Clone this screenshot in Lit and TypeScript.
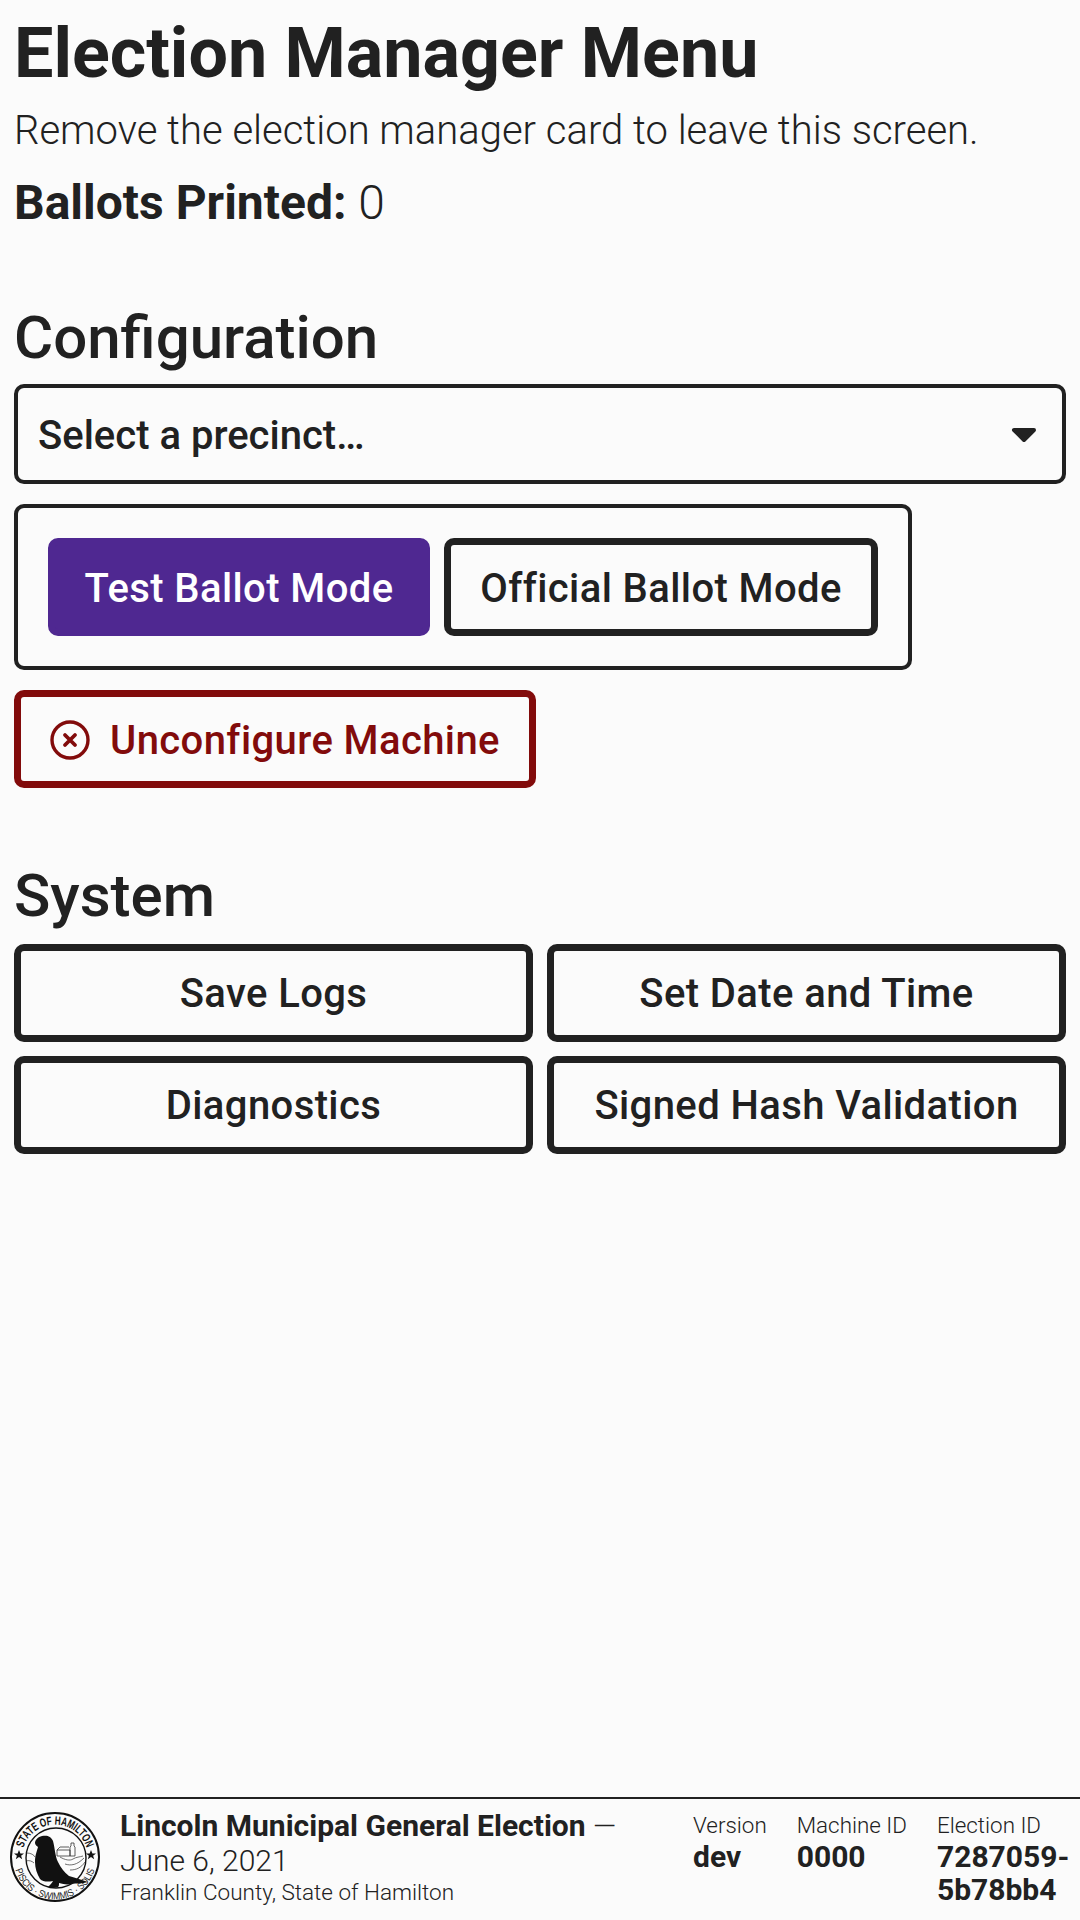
import { LitElement, html, css } from "lit";
import { customElement } from "lit/decorators.js";

@customElement("app-root")
export class AppRoot extends LitElement {
  static styles = css`
    :host { display: flex; flex-direction: column; width: 1080px; height: 1920px; background: #fbfbfb; color: #212121; font-family: Roboto, "Noto Sans", sans-serif; overflow: hidden; }
    main { flex: 1; padding: 14px 14px 0; min-height: 0; }
    h1 { margin: 0; font-size: 70px; line-height: 78px; font-weight: 700; }
    h2 { margin: 0; font-size: 60px; line-height: 64px; font-weight: 500; }
    .sub { margin: 16px 0 0; font-size: 40px; line-height: 46px; font-weight: 300; }
    .printed { margin: 24px 0 0; font-size: 48px; line-height: 50px; font-weight: 300; }
    .printed b { font-weight: 700; }
    .config { margin-top: 78px; }
    .sel { margin-top: 14px; height: 100px; box-sizing: border-box; border: 4px solid #212121; border-radius: 10px; display: flex; align-items: center; justify-content: space-between; padding: 2px 25px 0 20px; font-size: 40px; font-weight: 500; }
    .sel svg { width: 26px; height: 16px; display: block; }
    .modes { margin-top: 20px; width: 898px; height: 166px; box-sizing: border-box; border: 4px solid #212121; border-radius: 10px; display: flex; align-items: center; gap: 14px; padding: 0 30px; }
    .btn { box-sizing: border-box; height: 98px; padding-top: 2px; border: 7px solid #212121; border-radius: 10px; display: flex; align-items: center; justify-content: center; font-size: 40px; font-weight: 500; letter-spacing: 0.4px; white-space: nowrap; }
    .modes .btn { flex: none; }
    .test { width: 382px; background: #4f2891; border-color: #4f2891; color: #fff; }
    .official { width: 434px; }
    .danger { margin-top: 20px; width: 522px; border-color: #820b0b; color: #820b0b; gap: 20px; }
    .danger svg { width: 40px; height: 40px; display: block; }
    .system { margin-top: 76px; }
    .grid { margin-top: 16px; display: grid; grid-template-columns: 519px 519px; gap: 14px; }
    .grid .btn { padding-top: 0; }
    footer { height: 123px; flex: none; box-sizing: border-box; border-top: 2px solid #212121; display: flex; padding: 0 10px; }
    .seal { width: 90px; height: 90px; flex: none; margin-top: 13px; }
    .seal text { font-family: "Liberation Sans", sans-serif; }
    .title { margin-left: 20px; width: 520px; flex: none; font-size: 30px; line-height: 35px; font-weight: 300; padding-top: 9px; box-sizing: border-box; }
    .title b { font-weight: 700; }
    .title span { white-space: nowrap; }
    .title small { display: block; margin-top: 1px; font-size: 22.5px; line-height: 27px; }
    .meta { display: flex; gap: 30px; margin-left: 53px; font-size: 22.4px; line-height: 28px; font-weight: 300; padding-top: 12px; white-space: nowrap; }
    .meta b { display: block; margin-top: 1px; font-size: 30px; line-height: 33px; font-weight: 700; }
    .meta .id b { width: 140px; white-space: normal; }
  `;

  render() {
    return html`
      <main>
        <h1>Election Manager Menu</h1>
        <p class="sub">Remove the election manager card to leave this screen.</p>
        <p class="printed"><b>Ballots Printed:</b> 0</p>
        <section class="config">
          <h2>Configuration</h2>
          <div class="sel">
            <span>Select a precinct…</span>
            <svg viewBox="0 0 26 16"><path d="M3 3h20L13 13z" fill="#212121" stroke="#212121" stroke-width="4" stroke-linejoin="round"/></svg>
          </div>
          <div class="modes">
            <div class="btn test">Test Ballot Mode</div>
            <div class="btn official">Official Ballot Mode</div>
          </div>
          <div class="btn danger">
            <svg viewBox="0 0 40 40" fill="none" stroke="#820b0b" stroke-width="3.4">
              <circle cx="20" cy="20" r="18"/>
              <path d="M15 15l10 10M25 15l-10 10" stroke-width="3.8" stroke-linecap="round"/>
            </svg>
            <span>Unconfigure Machine</span>
          </div>
        </section>
        <section class="system">
          <h2>System</h2>
          <div class="grid">
            <div class="btn">Save Logs</div>
            <div class="btn">Set Date and Time</div>
            <div class="btn">Diagnostics</div>
            <div class="btn">Signed Hash Validation</div>
          </div>
        </section>
      </main>
      <footer>
        <svg class="seal" viewBox="0 0 90 90">
          <defs>
            <path id="topArc" d="M12.1 43.1A33 33 0 0 1 77.9 43.1" />
            <path id="botArc" d="M3.7 50A41.5 41.5 0 0 0 86.3 50"/>
          </defs>
          <circle cx="45" cy="45" r="44" fill="none" stroke="#111" stroke-width="2"/>
          <circle cx="46" cy="46" r="30" fill="none" stroke="#111" stroke-width="1.4"/>
          <text font-size="12" font-weight="700" fill="#111"><textPath href="#topArc" startOffset="50%" text-anchor="middle" textLength="84" lengthAdjust="spacingAndGlyphs">STATE OF HAMILTON</textPath></text>
          <text font-size="10" fill="#222"><textPath href="#botArc" startOffset="50%" text-anchor="middle" textLength="106" lengthAdjust="spacingAndGlyphs">PISCIS · SWIMMIS · SOLIS</textPath></text>
          <path d="M9 38l1.4 3.4h3.6l-2.9 2.3 1.1 3.5-3.2-2.1-3.2 2.1 1.1-3.5-2.9-2.3h3.6zM81 38l1.4 3.4h3.6l-2.9 2.3 1.1 3.5-3.2-2.1-3.2 2.1 1.1-3.5-2.9-2.3h3.6z" fill="#111"/>
          <path d="M25 31c0-3 3-6 7-7 5-1 9 0 11 5 2 7 2 15 5 21 3 6 6 10 11 14 7 2 13 4 19 6-6 2-11 1-17 2-4 1-8 0-12-1 0 2 0 3-1 4-3 1-7 1-10 0 2-2 4-4 5-6-5 1-10 1-13-2-3-5-5-11-5-17 0-7 2-11 3-15-1-1-3-2-3-4z" fill="#111"/>
          <path d="M61 31h3v3l1 1v9h-5v-9l1-1zM47 38h13v6H47zM47 38l3-3h9" fill="none" stroke="#333" stroke-width="0.8"/>
          <path d="M50 45c5 3 10 4 13 2s7-2 10-3M55 52c6 2 12 1 19-6M60 58c6 0 11-2 15-8" fill="none" stroke="#333" stroke-width="0.7"/>
          <path d="M17 41c4 0 7 2 8 4M16 49c3-1 6 0 8 2" fill="none" stroke="#333" stroke-width="0.7"/>
        </svg>
        <div class="title">
          <div><b>Lincoln Municipal General Election</b> <span>—</span> <span>June 6, 2021</span></div>
          <small>Franklin County, State of Hamilton</small>
        </div>
        <div class="meta">
          <div>Version<b>dev</b></div>
          <div>Machine ID<b>0000</b></div>
          <div class="id">Election ID<b>7287059-5b78bb4</b></div>
        </div>
      </footer>
    `;
  }
}
